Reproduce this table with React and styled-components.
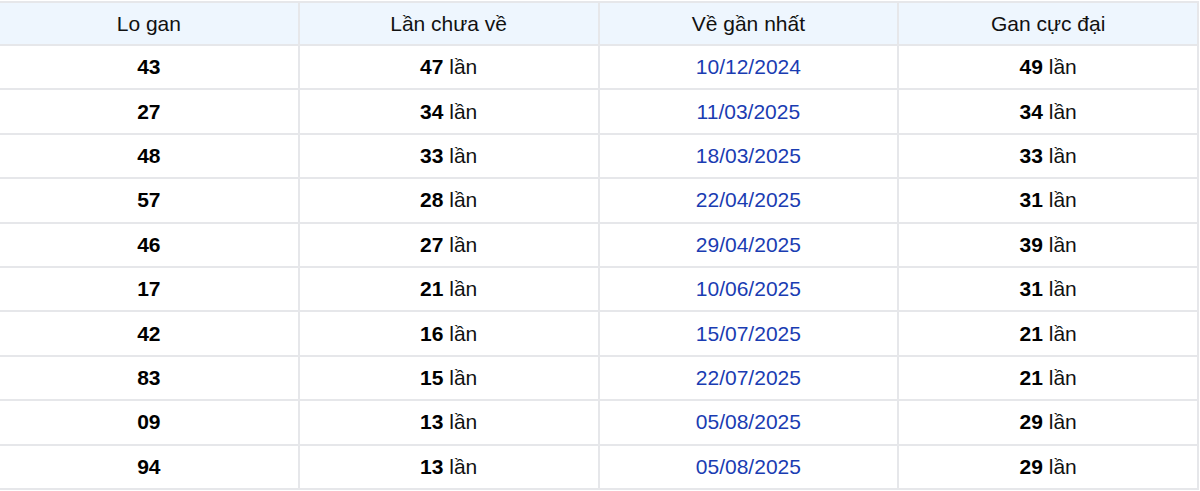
import React from "react";
import styled, { createGlobalStyle } from "styled-components";

const Global = createGlobalStyle`
  html, body { margin: 0; padding: 0; background: #fff; }
  body { font-family: "Liberation Sans", Arial, sans-serif; overflow: hidden; }
`;

const Wrap = styled.div`
  padding-top: 1px;
  margin-left: -2px;
  width: 1201px;
`;

const Table = styled.table`
  width: 100%;
  border-collapse: collapse;
  table-layout: fixed;
  font-size: 21px;
  color: #111;
`;

const Th = styled.th`
  background: #eef6fe;
  font-weight: 400;
  height: 41px;
  border: 2px solid #e6e7ea;
  text-align: center;
  padding: 0;
`;

const Td = styled.td`
  height: 42.4px;
  border: 2px solid #e6e7ea;
  text-align: center;
  padding: 0;
  color: ${(p) => (p.$date ? "#1a3cb2" : "#111")};
`;

const B = styled.b`
  font-weight: 700;
  color: #000;
`;

const rows = [
  ["43", "47", "10/12/2024", "49"],
  ["27", "34", "11/03/2025", "34"],
  ["48", "33", "18/03/2025", "33"],
  ["57", "28", "22/04/2025", "31"],
  ["46", "27", "29/04/2025", "39"],
  ["17", "21", "10/06/2025", "31"],
  ["42", "16", "15/07/2025", "21"],
  ["83", "15", "22/07/2025", "21"],
  ["09", "13", "05/08/2025", "29"],
  ["94", "13", "05/08/2025", "29"],
];

export default function App() {
  return (
    <>
      <Global />
      <Wrap>
        <Table>
          <thead>
            <tr>
              <Th>Lo gan</Th>
              <Th>Lần chưa về</Th>
              <Th>Về gần nhất</Th>
              <Th>Gan cực đại</Th>
            </tr>
          </thead>
          <tbody>
            {rows.map((r) => (
              <tr key={r[0]}>
                <Td><B>{r[0]}</B></Td>
                <Td><B>{r[1]}</B> lần</Td>
                <Td $date>{r[2]}</Td>
                <Td><B>{r[3]}</B> lần</Td>
              </tr>
            ))}
          </tbody>
        </Table>
      </Wrap>
    </>
  );
}
